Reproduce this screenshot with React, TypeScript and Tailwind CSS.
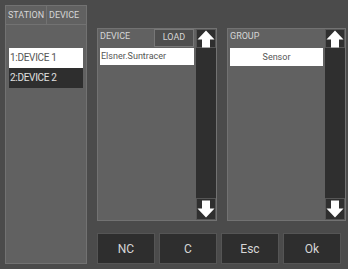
import React from "react";

const font = { fontFamily: "Roboto, 'Liberation Sans', sans-serif" };

function Arrow({ dir }: { dir: "up" | "down" }) {
  return (
    <svg width="18" height="18" viewBox="0 0 18 18" className={dir === "down" ? "rotate-180" : ""}>
      <path d="M9 0.5 L17.5 9.5 L13 9.5 L13 17.5 L5 17.5 L5 9.5 L0.5 9.5 Z" fill="#ffffff" />
    </svg>
  );
}

function ScrollBar() {
  return (
    <div className="flex w-[20px] flex-col bg-[#2f2f2f]">
      <div className="flex h-[19px] items-center justify-center border border-[#555]">
        <Arrow dir="up" />
      </div>
      <div className="flex-1" />
      <div className="flex h-[22px] items-center justify-center border border-[#555]">
        <Arrow dir="down" />
      </div>
    </div>
  );
}

export default function App() {
  return (
    <div className="flex h-[269px] w-[348px] bg-[#4b4b4b] text-[#d6d6d6]" style={font}>
      <div className="ml-[5px] mt-[5px] flex h-[259px] w-[82px] flex-col border border-[#727272] bg-[#616161]">
        <div className="flex h-[19px] border-b border-[#727272] text-[9px] leading-[18px]">
          <div className="w-[41px] border-r border-[#727272] pl-[2px]">STATION</div>
          <div className="pl-[2px]">DEVICE</div>
        </div>
        <div className="mx-[3px] mt-[23px] flex flex-col text-[10px] tracking-[-0.3px]">
          <div className="h-[20px] bg-white pl-[1px] leading-[20px] text-[#555]">1:DEVICE 1</div>
          <div className="h-[20px] bg-[#2e2e2e] pl-[1px] leading-[20px] text-[#e0e0e0]">2:DEVICE 2</div>
        </div>
      </div>
      <div className="ml-[10px] mt-[28px] flex flex-col">
        <div className="flex h-[193px] gap-[10px]">
          <div className="flex w-[120px] border border-[#727272] bg-[#616161]">
            <div className="flex flex-1 flex-col px-[2px]">
              <div className="flex h-[19px] items-start justify-between">
                <span className="mt-[2px] text-[9px] leading-[10px]">DEVICE</span>
                <div className="flex h-[18px] w-[40px] items-center justify-center border border-[#777] bg-[#4e4e4e] text-[9px]">LOAD</div>
              </div>
              <div className="h-[17px] bg-white pl-[1px] text-[9px] leading-[17px] text-[#555]">Elsner.Suntracer</div>
            </div>
            <ScrollBar />
          </div>
          <div className="flex w-[119px] border border-[#727272] bg-[#616161]">
            <div className="flex flex-1 flex-col px-[2px]">
              <div className="flex h-[19px] items-start">
                <span className="mt-[2px] text-[9px] leading-[10px]">GROUP</span>
              </div>
              <div className="h-[18px] bg-white text-center text-[9px] leading-[18px] text-[#555]">Sensor</div>
            </div>
            <ScrollBar />
          </div>
        </div>
        <div className="mt-[12px] flex gap-[4px] text-[12px]">
          <div className="flex h-[31px] w-[58px] items-center justify-center border border-[#555] bg-[#2e2e2e]">NC</div>
          <div className="flex h-[31px] w-[58px] items-center justify-center border border-[#555] bg-[#2e2e2e]">C</div>
          <div className="flex h-[31px] w-[58px] items-center justify-center border border-[#555] bg-[#2e2e2e]">Esc</div>
          <div className="flex h-[31px] w-[58px] items-center justify-center border border-[#555] bg-[#2e2e2e]">Ok</div>
        </div>
      </div>
    </div>
  );
}
